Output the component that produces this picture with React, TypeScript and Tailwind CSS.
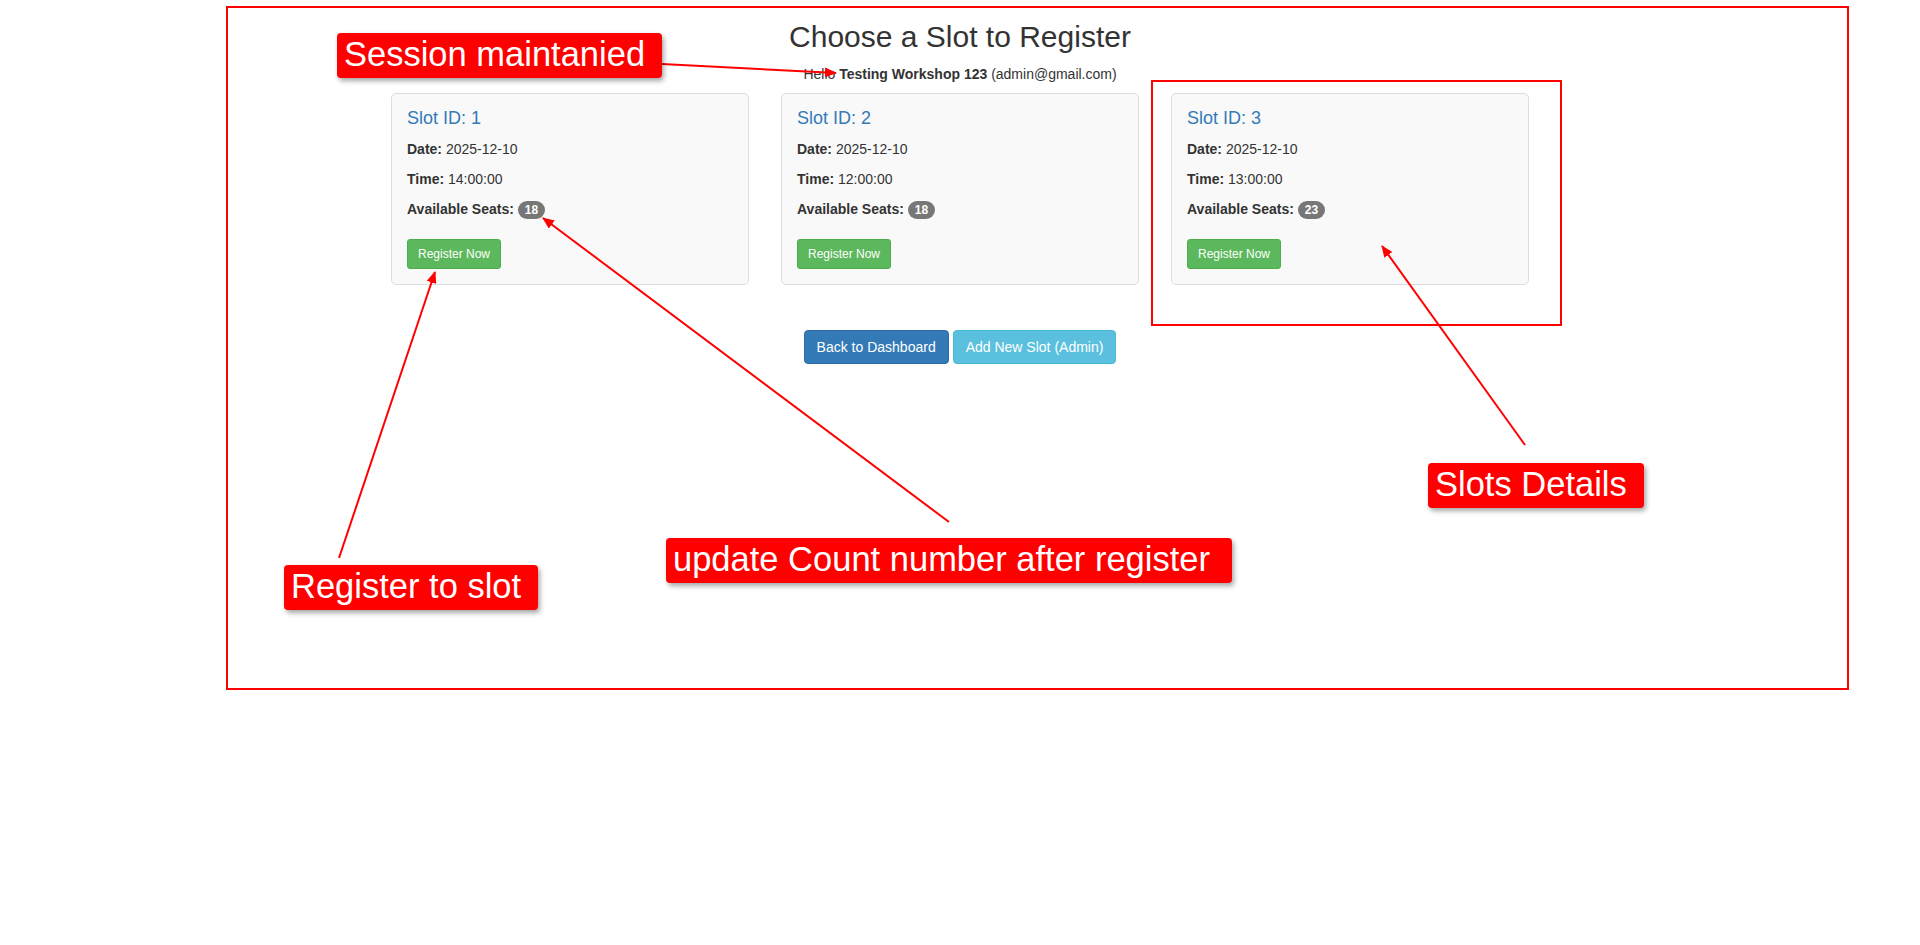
import React from "react";

const slots = [
  { id: 1, date: "2025-12-10", time: "14:00:00", seats: 18 },
  { id: 2, date: "2025-12-10", time: "12:00:00", seats: 18 },
  { id: 3, date: "2025-12-10", time: "13:00:00", seats: 23 },
];

function Label({ text, className }: { text: string; className: string }) {
  return (
    <div
      className={
        "absolute h-[45px] flex items-center pl-[7px] pb-[2px] bg-[#ff0000] rounded-[4px] text-white text-[34.5px] leading-none whitespace-nowrap shadow-[2px_3px_5px_rgba(0,0,0,0.35)] " +
        className
      }
    >
      {text}
    </div>
  );
}

export default function App() {
  return (
    <div className="relative w-full h-[945px] bg-white text-[#333] font-['Liberation_Sans',Arial,sans-serif] overflow-hidden">
      <div className="flex flex-col items-center">
        <h2 className="mt-[20px] mb-[11px] text-[30px] leading-[33px] font-normal">
          Choose a Slot to Register
        </h2>
        <p className="text-[14px] leading-[20px] mb-[9px]">
          Hello <b>Testing Workshop 123</b> (admin@gmail.com)
        </p>
        <div className="flex gap-[32px]">
          {slots.map((s) => (
            <div
              key={s.id}
              className="w-[358px] border border-[#dddddd] bg-[#f9f9f9] rounded-[5px] pt-[14px] px-[15px] pb-[15px]"
            >
              <h4 className="text-[18px] leading-[20px] mb-[11px] text-[#337ab7] font-normal">
                Slot ID: {s.id}
              </h4>
              <p className="text-[14px] leading-[20px] mb-[10px]">
                <b>Date:</b> {s.date}
              </p>
              <p className="text-[14px] leading-[20px] mb-[10px]">
                <b>Time:</b> {s.time}
              </p>
              <p className="text-[14px] leading-[20px] mb-[20px]">
                <b>Available Seats:</b>{" "}
                <span className="inline-block align-middle bg-[#777777] text-white text-[12px] font-bold leading-none px-[7px] py-[3px] rounded-[10px]">
                  {s.seats}
                </span>
              </p>
              <button className="h-[30px] px-[10px] text-[12px] leading-[18px] text-white bg-[#5cb85c] border border-[#4cae4c] rounded-[3px]">
                Register Now
              </button>
            </div>
          ))}
        </div>
        <div className="mt-[45px] flex gap-[4px]">
          <button className="h-[34px] px-[12px] text-[14px] leading-[20px] text-white bg-[#337ab7] border border-[#2e6da4] rounded-[4px]">
            Back to Dashboard
          </button>
          <button className="h-[34px] px-[12px] text-[14px] leading-[20px] text-white bg-[#5bc0de] border border-[#46b8da] rounded-[4px]">
            Add New Slot (Admin)
          </button>
        </div>
      </div>

      <svg
        className="absolute left-0 top-0 pointer-events-none"
        width="1920"
        height="945"
        viewBox="0 0 1920 945"
      >
        <defs>
          <marker
            id="ah"
            markerUnits="userSpaceOnUse"
            markerWidth="12"
            markerHeight="10"
            refX="11"
            refY="5"
            orient="auto"
          >
            <path d="M0,0 L12,5 L0,10 z" fill="#ff0000" />
          </marker>
        </defs>
        <rect x="227" y="7" width="1621" height="682" fill="none" stroke="#ff0000" strokeWidth="2" />
        <rect x="1152" y="81" width="409" height="244" fill="none" stroke="#ff0000" strokeWidth="2" />
        <line x1="662" y1="64" x2="836" y2="73" stroke="#ff0000" strokeWidth="2" markerEnd="url(#ah)" />
        <line x1="339" y1="558" x2="435" y2="272" stroke="#ff0000" strokeWidth="2" markerEnd="url(#ah)" />
        <line x1="949" y1="522" x2="543" y2="218" stroke="#ff0000" strokeWidth="2" markerEnd="url(#ah)" />
        <line x1="1525" y1="445" x2="1382" y2="246" stroke="#ff0000" strokeWidth="2" markerEnd="url(#ah)" />
      </svg>

      <Label text="Session maintanied" className="left-[337px] top-[33px] w-[325px] h-[44px]" />
      <Label text="Slots Details" className="left-[1428px] top-[463px] w-[216px]" />
      <Label text="Register to slot" className="left-[284px] top-[565px] w-[254px]" />
      <Label text="update Count number after register" className="left-[666px] top-[538px] w-[566px]" />
    </div>
  );
}
